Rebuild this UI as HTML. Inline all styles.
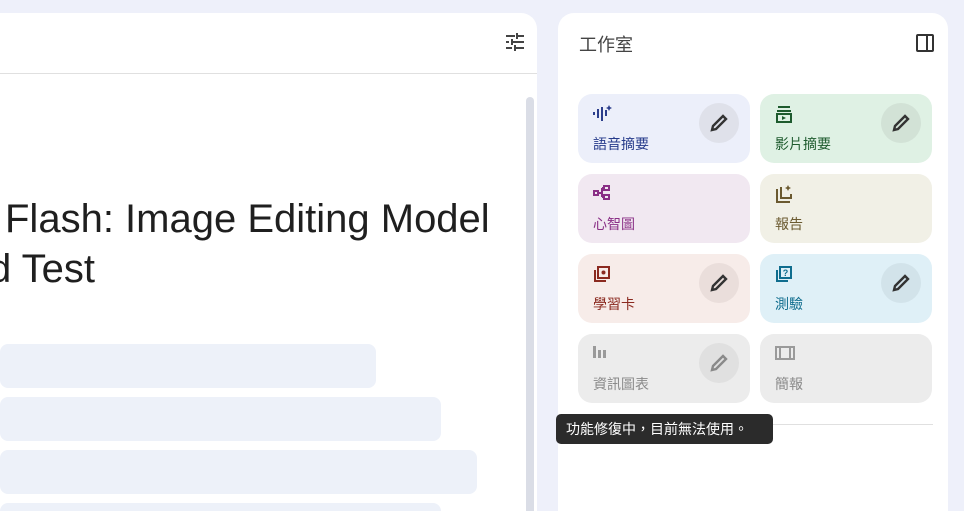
<!DOCTYPE html>
<html style="width:964px;height:511px;overflow:hidden"><head><meta charset="utf-8"><style>
*{box-sizing:border-box;margin:0;padding:0}
body{width:964px;height:511px;background:#eef0fa;position:relative;overflow:hidden;font-family:"Liberation Sans","Noto Sans CJK TC",sans-serif}
.left{position:absolute;left:-20px;top:13px;width:557px;height:498px;background:#fff;border-radius:16px 16px 0 0;overflow:hidden}
.hdiv{position:absolute;left:0;top:73px;width:537px;height:1px;background:#e0e0e0}
.sb{position:absolute;left:526px;top:97px;width:8px;height:414px;background:#dadde6;border-radius:4px 4px 0 0}
.title{position:absolute;left:5px;top:194px;font-size:40px;color:#1f1f1f;line-height:50px;white-space:nowrap}
.bar{position:absolute;left:0;height:44px;background:#edf1f9;border-radius:8px}
.right{position:absolute;left:558px;top:13px;width:390px;height:498px;background:#fff;border-radius:16px 16px 0 0}
.rh{position:absolute;left:579px;top:31px;font-size:18px;color:#444}
.card{position:absolute;width:172px;height:69px;border-radius:14px}
.card .lb{position:absolute;left:15px;top:40px;font-size:14px}
.card svg.ic{position:absolute;left:15px;top:11px}
.pen{position:absolute;left:121px;top:9px;width:40px;height:40px;border-radius:50%;display:flex;align-items:center;justify-content:center}
.tip{position:absolute;left:556px;top:414px;width:217px;height:30px;background:#2b2b2b;border-radius:5px;color:#fff;font-size:14px;line-height:30px;padding-left:10px}
</style></head><body>
<div class="left"></div>
<div class="hdiv"></div>
<svg style="position:absolute;left:505px;top:32px" width="20" height="20" viewBox="0 0 20 20" fill="#444"><rect x="1" y="3" width="9" height="2"/><rect x="13" y="3" width="6" height="2"/><rect x="11" y="1" width="2" height="6"/><rect x="1" y="9" width="3" height="2"/><rect x="8" y="9" width="11" height="2"/><rect x="6" y="7" width="2" height="6"/><rect x="1" y="15" width="6" height="2"/><rect x="11" y="15" width="8" height="2"/><rect x="9" y="13" width="2" height="6"/></svg>
<div class="sb"></div>
<div class="title">Flash: Image Editing Model<br><span style="margin-left:-16px">d Test</span></div>
<div class="bar" style="top:344px;width:376px"></div>
<div class="bar" style="top:397px;width:441px"></div>
<div class="bar" style="top:450px;width:477px"></div>
<div class="bar" style="top:503px;width:441px;height:8px;border-radius:8px 8px 0 0"></div>
<div class="right"></div>
<div class="rh">工作室</div>
<svg style="position:absolute;left:915px;top:33px" width="20" height="20" viewBox="0 0 20 20" fill="none" stroke="#333" stroke-width="2"><rect x="2" y="2" width="16" height="16" rx="1"/><line x1="12" y1="2" x2="12" y2="18"/></svg>

<div class="card" style="left:578px;top:94px;background:#eceffa"><svg class="ic" width="20" height="16" viewBox="0 0 20 16" fill="#2c3e8c"><rect x="0" y="7" width="2" height="3"/><rect x="4" y="4" width="2" height="9"/><rect x="8" y="2" width="2" height="14"/><rect x="12" y="5" width="2" height="6"/><path d="M16 0l1 2 2 1-2 1-1 2-1-2-2-1 2-1z"/></svg><div class="lb" style="color:#253a8a">語音摘要</div><div class="pen" style="background:#dfe1ea"><svg width="20" height="20" viewBox="0 0 20 20"><path d="M3 17l1-4L14 3l3 3L7 16z" fill="none" stroke="#333" stroke-width="2.4"/></svg></div></div>

<div class="card" style="left:760px;top:94px;background:#dff1e4"><svg class="ic" width="18" height="18" viewBox="0 0 18 18" fill="none" stroke="#1e5b2e" stroke-width="2"><line x1="3" y1="2" x2="15" y2="2"/><line x1="2" y1="6" x2="16" y2="6"/><rect x="2" y="9" width="14" height="8"/><path d="M7 11v4l4-2z" fill="#1e5b2e" stroke="none"/></svg><div class="lb" style="color:#1e5b2e">影片摘要</div><div class="pen" style="background:#d2e2d6"><svg width="20" height="20" viewBox="0 0 20 20"><path d="M3 17l1-4L14 3l3 3L7 16z" fill="none" stroke="#333" stroke-width="2.4"/></svg></div></div>

<div class="card" style="left:578px;top:174px;background:#f1e8f1"><svg class="ic" width="18" height="16" viewBox="0 0 18 16" fill="none" stroke="#8a2f86" stroke-width="2"><rect x="1" y="6" width="4" height="4"/><rect x="11" y="1" width="5" height="4"/><rect x="11" y="10" width="5" height="4"/><path d="M5 8h4M9 3v9M9 3h2M9 12h2"/></svg><div class="lb" style="color:#8a2f86">心智圖</div></div>

<div class="card" style="left:760px;top:174px;background:#f1f0e6"><svg class="ic" width="18" height="18" viewBox="0 0 18 18" fill="none" stroke="#6b5a30" stroke-width="2"><path d="M2 4v13h13M6 2v11h10V9"/><path d="M13 0l1 2 2 1-2 1-1 2-1-2-2-1 2-1z" fill="#6b5a30" stroke="none"/></svg><div class="lb" style="color:#6b5a30">報告</div></div>

<div class="card" style="left:578px;top:254px;background:#f7ece9"><svg class="ic" width="18" height="18" viewBox="0 0 18 18" fill="none" stroke="#8b2a20" stroke-width="2"><path d="M2 5v11h11"/><rect x="5" y="2" width="11" height="11"/><circle cx="10.5" cy="7.5" r="2" fill="#8b2a20" stroke="none"/></svg><div class="lb" style="color:#8b2a20">學習卡</div><div class="pen" style="background:#eadedb"><svg width="20" height="20" viewBox="0 0 20 20"><path d="M3 17l1-4L14 3l3 3L7 16z" fill="none" stroke="#333" stroke-width="2.4"/></svg></div></div>

<div class="card" style="left:760px;top:254px;background:#dff0f7"><svg class="ic" width="18" height="18" viewBox="0 0 18 18" fill="none" stroke="#0f6d8e" stroke-width="2"><path d="M2 5v11h11"/><rect x="5" y="2" width="11" height="11"/><text x="10.5" y="11" font-size="9" text-anchor="middle" fill="#0f6d8e" stroke="none" font-weight="bold" font-family="Liberation Sans">?</text></svg><div class="lb" style="color:#0f6d8e">測驗</div><div class="pen" style="background:#d2e3ea"><svg width="20" height="20" viewBox="0 0 20 20"><path d="M3 17l1-4L14 3l3 3L7 16z" fill="none" stroke="#333" stroke-width="2.4"/></svg></div></div>

<div class="card" style="left:578px;top:334px;background:#ececec"><svg class="ic" width="16" height="14" viewBox="0 0 16 14" fill="#9a9a9a"><rect x="0" y="1" width="3" height="12"/><rect x="5" y="5" width="3" height="8"/><rect x="10" y="5" width="3" height="8"/></svg><div class="lb" style="color:#8a8a8a">資訊圖表</div><div class="pen" style="background:#e0e0e0"><svg width="20" height="20" viewBox="0 0 20 20"><path d="M3 17l1-4L14 3l3 3L7 16z" fill="none" stroke="#8a8a8a" stroke-width="2.4"/></svg></div></div>

<div class="card" style="left:760px;top:334px;background:#ececec"><svg class="ic" width="20" height="16" viewBox="0 0 20 16" fill="none" stroke="#9a9a9a" stroke-width="2"><rect x="1" y="2" width="18" height="12"/><line x1="5" y1="2" x2="5" y2="14"/><line x1="15" y1="2" x2="15" y2="14"/></svg><div class="lb" style="color:#8a8a8a">簡報</div></div>

<div style="position:absolute;left:578px;top:424px;width:355px;height:1px;background:#e0e0e0"></div>
<div class="tip">功能修復中，目前無法使用。</div>
</body></html>
